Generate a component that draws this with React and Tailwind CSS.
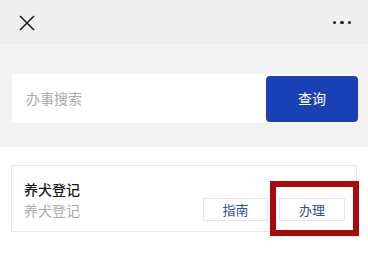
export default function App() {
  return (
    <div
      className="relative w-[368px] h-[265px] bg-white overflow-hidden"
      style={{ fontFamily: '"Noto Sans CJK SC", "Noto Sans", sans-serif' }}
    >
      {/* 顶部栏 */}
      <div className="h-[44px] bg-[#efefef] flex items-center justify-between pl-[19px] pr-[17px] border-b border-[#ebebeb]">
        <svg width="16" height="16" viewBox="0 0 16 16" className="mt-[2px]">
          <path d="M1 1 L15 15 M15 1 L1 15" stroke="#222" strokeWidth="1.6" fill="none" />
        </svg>
        <div className="flex gap-[4px] mt-[2px]">
          <span className="w-[3.5px] h-[3.5px] rounded-full bg-[#222]" />
          <span className="w-[3.5px] h-[3.5px] rounded-full bg-[#222]" />
          <span className="w-[3.5px] h-[3.5px] rounded-full bg-[#222]" />
        </div>
      </div>

      {/* 搜索 */}
      <div className="bg-[#f2f2f2] pt-[30px] pb-[24px] pl-[12px] pr-[10px]">
        <div className="h-[49px] bg-white rounded-[3px] flex items-center justify-between pl-[14px]">
          <span className="text-[14px] text-[#a9a9a9]">办事搜索</span>
          <div className="w-[92px] h-[46px] bg-[#1a40b6] rounded-[4px] flex items-center justify-center text-white text-[14px]">
            查询
          </div>
        </div>
      </div>

      {/* 事项卡片 */}
      <div className="mt-[18px] mx-[11px] h-[67px] border border-[#e8e8e8] flex items-stretch justify-between pl-[12px] pr-[11px]">
        <div className="flex flex-col pt-[13px]">
          <span className="text-[14px] leading-[20px] text-[#1a1a1a] font-medium">养犬登记</span>
          <span className="text-[14px] leading-[20px] text-[#aaaaaa] mt-[1px]">养犬登记</span>
        </div>
        <div className="flex items-end gap-[11px] pb-[10px]">
          <div className="w-[65px] h-[23px] border border-[#e6e6e6] flex items-center justify-center text-[13px] text-[#2f4fa3]">
            指南
          </div>
          <div className="w-[66px] h-[23px] border border-[#e6e6e6] flex items-center justify-center text-[13px] text-[#2f4fa3]">
            办理
          </div>
        </div>
      </div>

      {/* 红色标注框 */}
      <div className="absolute left-[270px] top-[181px] w-[89px] h-[55px] border-[6px] border-[#a60a0a]" />
    </div>
  );
}
